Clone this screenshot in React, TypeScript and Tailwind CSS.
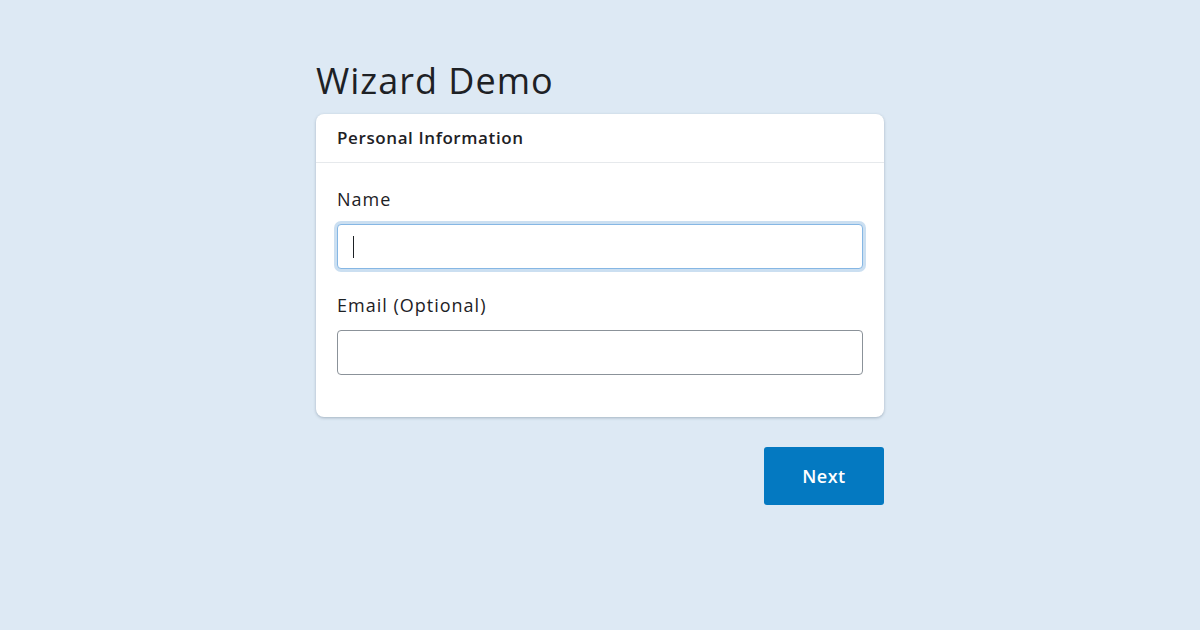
import { useState } from "react";

const App = () => {
  const [name, setName] = useState("");
  const [email, setEmail] = useState("");

  return (
    <div
      className="min-h-[630px] w-full bg-[#dde9f4] text-[#1b1e21]"
      style={{ fontFamily: '"Open Sans", "Noto Sans", sans-serif' }}
    >
      <div className="mx-auto w-[568px] pt-[59px]">
        {/* Title */}
        <h1 className="text-[36px] leading-[44px] font-normal tracking-[1px] text-[#1d2125] mb-[11px]">
          Wizard Demo
        </h1>

        {/* Card */}
        <div className="bg-white rounded-[8px] shadow-[0_1px_3px_rgba(60,80,100,0.35)]">
          <div className="h-[49px] px-[21px] flex items-center border-b border-[#e6e9ec]">
            <h2 className="text-[17px] font-semibold tracking-[0.6px] text-[#1d2125]">
              Personal Information
            </h2>
          </div>

          <div className="px-[21px] pt-[24px] pb-[42px]">
            <label className="block text-[18px] leading-[24px] tracking-[1px] text-[#1d2125] mb-[13px]">
              Name
            </label>
            <div className="relative">
              <input
                value={name}
                onChange={(e) => setName(e.target.value)}
                className="block w-full h-[45px] rounded-[4px] border border-[#86b7e4] bg-white px-[14px] text-[18px] outline-none shadow-[0_0_0_3px_rgba(140,185,225,0.45)]"
              />
              {name === "" && (
                <span className="absolute left-[16px] top-[12px] h-[22px] w-px bg-[#1d2125]" />
              )}
            </div>

            <label className="block text-[18px] leading-[24px] tracking-[1px] text-[#1d2125] mt-[24px] mb-[13px]">
              Email (Optional)
            </label>
            <input
              value={email}
              onChange={(e) => setEmail(e.target.value)}
              className="block w-full h-[45px] rounded-[4px] border border-[#8b9299] bg-white px-[14px] text-[18px] outline-none"
            />
          </div>
        </div>

        {/* Actions */}
        <div className="flex justify-end mt-[30px]">
          <button className="w-[120px] h-[58px] rounded-[3px] bg-[#0479c1] text-white text-[18px] font-semibold tracking-[0.5px]">
            Next
          </button>
        </div>
      </div>
    </div>
  );
};

export default App;
